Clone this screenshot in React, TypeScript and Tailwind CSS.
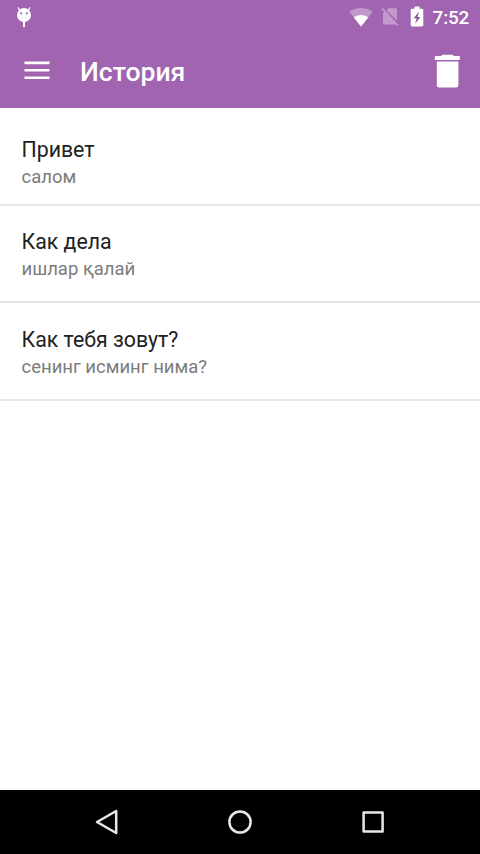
import { clsx } from 'clsx'

interface HistoryItem {
  id: number
  source: string
  translation: string
}

const HISTORY: HistoryItem[] = [
  { id: 1, source: 'Привет', translation: 'салом' },
  { id: 2, source: 'Как дела', translation: 'ишлар қалай' },
  { id: 3, source: 'Как тебя зовут?', translation: 'сенинг исминг нима?' },
]

function StatusBar() {
  return (
    <div className="flex h-[36px] items-start pt-[5px] pr-[11px] pl-[15px] text-white">
      <svg width="18" height="24" viewBox="0 0 18 24" fill="#fff">
        <path d="M4.500 5 3.200 2.700M13.500 5l1.300-2.300" stroke="#fff" strokeWidth="1.300" strokeLinecap="round" />
        <circle cx="9" cy="10" r="7" />
        <path d="M8 15h2v6.200a1 1 0 0 1-2 0z" />
        <circle cx="6.200" cy="8.300" r="1.100" fill="#a064b0" />
        <circle cx="11.800" cy="8.300" r="1.100" fill="#a064b0" />
      </svg>
      <div className="flex-1" />
      <svg className="mt-[2px]" width="24" height="20" viewBox="0 0 24 20" fill="#fff">
        <path d="M12 19.500.3 4.800C3.500 2.300 7.500 1 12 1s8.500 1.300 11.700 3.800z" opacity=".35" />
        <path d="M12 19.500 4.800 10.400C6.800 8.900 9.300 8 12 8s5.200.9 7.200 2.400z" />
      </svg>
      <svg className="mt-[2px] ml-[8px]" width="20" height="20" viewBox="0 0 20 20" fill="#fff" opacity=".35">
        <path d="M7.500 1.300H15a1 1 0 0 1 1 1v11.200L5.300 3.400z" />
        <path d="M.5 2.200 1.800 1 17.300 17.800 16 19l-1.500-1.500H3a1 1 0 0 1-1-1V6.500l1.200-1.500z" />
      </svg>
      <svg className="mt-[1px] ml-[9px]" width="14" height="21" viewBox="0 0 14 21">
        <path d="M4.500 0.500h5v2.300H12a1.300 1.300 0 0 1 1.300 1.300v15A1.300 1.300 0 0 1 12 20.400H2A1.300 1.300 0 0 1 .7 19.100v-15A1.300 1.300 0 0 1 2 2.800h2.500z" fill="#fff" />
        <path d="M9 5.500 3.800 12.300h3L5 17.800l5.400-6.900H7.500z" fill="#80548c" />
      </svg>
      <span className="ml-[9px] text-[18.900px] leading-[26px] font-medium tracking-[-0.200px]">7:52</span>
    </div>
  )
}

function AppBar() {
  return (
    <header className="flex h-[72px] items-center pr-[19px] pl-[24px] text-white">
      <button aria-label="Меню" className="pb-[2px]">
        <svg width="26" height="20" viewBox="0 0 26 20" fill="#fff">
          <path d="M.5.600h25v2.600H.5zM.5 8h25v2.600H.5zM.5 15.400h25V18H.5z" />
        </svg>
      </button>
      <h1 className="ml-[30px] flex-1 text-[26.600px] leading-[32px] font-medium">История</h1>
      <button aria-label="Очистить" className="pb-[2px]">
        <svg width="27" height="34" viewBox="0 0 27 34" fill="#fff">
          <path d="M7 2 8.500.8h10L20 2h5.800v4H.8V2zM2.800 7.500h21.600V31a2.500 2.500 0 0 1-2.500 2.500H5.300A2.500 2.500 0 0 1 2.800 31z" />
        </svg>
      </button>
    </header>
  )
}

function NavBar() {
  return (
    <nav className="flex h-[64px] items-center justify-between bg-black px-[94px]">
      <svg width="26" height="26" viewBox="0 0 26 26" fill="none" stroke="#e8e8e8" strokeWidth="2.500" strokeLinejoin="round">
        <path d="M22.200 2v22L3 13z" />
      </svg>
      <svg width="26" height="26" viewBox="0 0 26 26" fill="none" stroke="#e8e8e8" strokeWidth="2.500">
        <circle cx="13" cy="13" r="10.600" />
      </svg>
      <svg width="26" height="26" viewBox="0 0 26 26" fill="none" stroke="#e8e8e8" strokeWidth="2.500" strokeLinejoin="round">
        <path d="M3.600 3.500h19v19h-19z" />
      </svg>
    </nav>
  )
}

export default function App() {
  return (
    <div className="flex h-[854px] w-[480px] flex-col overflow-hidden bg-white font-['Roboto','Noto_Sans',sans-serif]">
      <div className="bg-[#a064b0]">
        <StatusBar />
        <AppBar />
      </div>

      <ul className="flex-1">
        {HISTORY.map((item, i) => (
          <li
            key={item.id}
            className={clsx(
              'pl-[21.500px]',
              i === 0 && 'h-[98px] border-b-2 border-[#e6e6e6] pt-[28px]',
              i === 1 && 'h-[97px] border-b-2 border-[#e6e6e6] pt-[22px]',
              i === 2 && 'h-[98px] border-b-2 border-[#e6e6e6] pt-[23px]',
            )}
          >
            <p className="text-[21.300px] leading-[28px] text-[#212121]">{item.source}</p>
            <p className="text-[18.500px] leading-[26px] text-[#7c7c7c]">{item.translation}</p>
          </li>
        ))}
      </ul>

      <NavBar />
    </div>
  )
}
